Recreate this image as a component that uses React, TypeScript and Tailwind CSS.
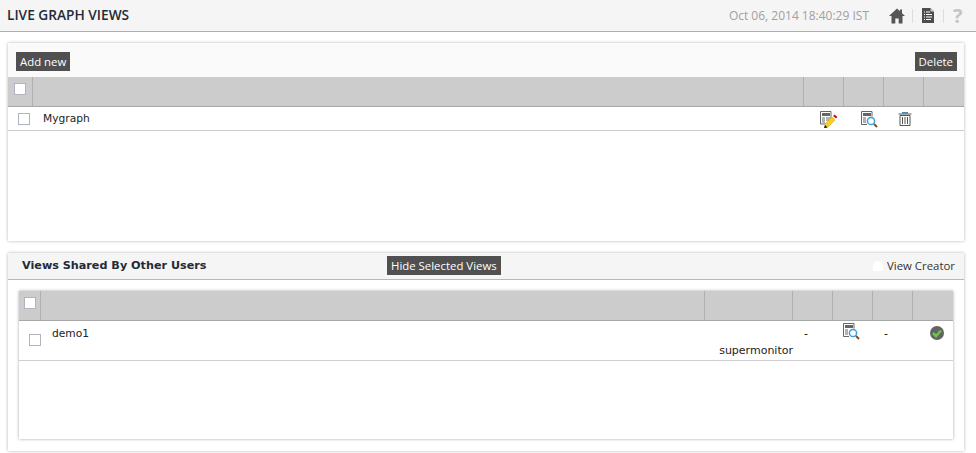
const sans = "font-['Open_Sans','Liberation_Sans',sans-serif]";
const deja = "font-['DejaVu_Sans','Liberation_Sans',sans-serif]";

function Check({ className = "" }: { className?: string }) {
  return <span className={`block w-[12px] h-[12px] bg-white border border-[#aeb4c0] ${className}`} />;
}

function EditIcon() {
  return (
    <svg width="18" height="17" viewBox="0 0 18 17">
      <path d="M.5.5h10.500v7l-4 5.500h-6.500z" fill="#fff" stroke="#666" />
      <rect x="2" y="2" width="8" height="3" fill="#666" />
      <path d="M2 7h3M2 9h3M2 11h3M6 7h4M6 9h3" stroke="#666" />
      <path d="M5 13l7-7 3 3-7 7-3 1z" fill="#f7cf1c" stroke="#caa012" strokeWidth=".5" />
      <path d="M13 5l1.500-1.500 3 2.500-1.500 1.500z" fill="#d8101c" />
      <path d="M5 14l2.500 2.500-3.500 .5z" fill="#111" />
    </svg>
  );
}

function ViewIcon() {
  return (
    <svg width="17" height="17" viewBox="0 0 17 17">
      <path d="M.5.500h10.500v5M6 13.500h-5.500v-13" fill="#fff" stroke="#666" />
      <rect x="2" y="2" width="8" height="3" fill="#666" />
      <path d="M2 7h3M2 9h3M2 11h3" stroke="#666" />
      <circle cx="10" cy="10" r="3.600" fill="#fff" stroke="#3b9fdc" strokeWidth="1.500" />
      <path d="M13 13l3 3" stroke="#8a4a2a" strokeWidth="2" />
    </svg>
  );
}

function TrashIcon() {
  return (
    <svg width="14" height="14" viewBox="0 0 14 14">
      <rect x="4" y="0" width="6" height="1.500" fill="#4a86b0" />
      <path d="M.5 2h13" stroke="#555" />
      <path d="M2 3.500h10v10h-10z" fill="#fff" stroke="#555" />
      <path d="M4.500 5v7M7 5v7M9.500 5v7" stroke="#555" />
    </svg>
  );
}

function HomeIcon() {
  return (
    <svg width="16" height="16" viewBox="0 0 16 16">
      <path d="M8 .5L0 8h2.500v7.500h3.800v-5h3.400v5h3.800V8H16l-3-2.800V1.500h-2v1.800z" fill="#555" />
    </svg>
  );
}

function DocIcon() {
  return (
    <svg width="12" height="15" viewBox="0 0 12 15">
      <path d="M0 0h8.500L12 3.500V15H0z" fill="#4d4d4d" />
      <path d="M8.500 0v3.500H12z" fill="#ccc" />
      <path d="M2 4h1M4 4h4M2 6.500h1M4 6.500h6M2 9h1M4 9h6M2 11.500h1M4 11.500h5" stroke="#fff" />
    </svg>
  );
}

function OkIcon() {
  return (
    <svg width="14" height="14" viewBox="0 0 14 14">
      <circle cx="7" cy="7" r="7" fill="#636363" />
      <path d="M3 7l3 3 5-5.500" fill="none" stroke="#6cc24c" strokeWidth="2.600" />
    </svg>
  );
}

function DarkButton({ label }: { label: string }) {
  return (
    <span className={`${sans} block bg-[#505050] text-white text-[11.400px] leading-[19px] h-[19px] px-[4px] whitespace-nowrap`}>
      {label}
    </span>
  );
}

export default function App() {
  return (
    <div className="w-[976px] h-[453px] bg-white overflow-hidden">
      {/* top bar */}
      <div className="h-[32px] bg-[#f5f5f5] border-b border-[#b0b0b0] flex items-center pl-[7px] pr-[11px]">
        <span className={`${sans} text-[13.700px] font-semibold text-[#222b36]`}>LIVE GRAPH VIEWS</span>
        <span className={`${sans} ml-auto text-[12px] text-[#a0a0a0]`}>Oct 06, 2014 18:40:29 IST</span>
        <div className="ml-[20px] flex items-center">
          <HomeIcon />
          <span className="ml-[7px] mr-[9px] w-px h-[14px] bg-[#ddd]" />
          <DocIcon />
          <span className="mx-[9px] w-px h-[14px] bg-[#ddd]" />
          <span className={`${sans} w-[12px] text-[20px] leading-none font-bold text-[#c4c4c4]`}>?</span>
        </div>
      </div>

      {/* my views */}
      <div className="mt-[11px] mx-[8px] h-[198px] w-[956px] bg-white shadow-[0_0_3px_rgba(0,0,0,0.3)]">
        <div className="h-[34px] bg-[#fafafa] flex items-end justify-between pl-[8px] pr-[7px] pb-[6px]">
          <DarkButton label="Add new" />
          <DarkButton label="Delete" />
        </div>
        <div className="h-[30px] bg-[#cccccc] border-b border-[#a8a8a8] flex">
          <div className="w-[25px] border-r border-[#b0b0b0] pl-[6px] pt-[6px]">
            <Check />
          </div>
          <div className="flex-1 border-r border-[#b0b0b0]" />
          <div className="w-[40px] border-r border-[#b0b0b0]" />
          <div className="w-[40px] border-r border-[#b0b0b0]" />
          <div className="w-[40px] border-r border-[#b0b0b0]" />
          <div className="w-[40px]" />
        </div>
        <div className="h-[24px] border-b border-[#cfcfcf] flex items-center">
          <div className="w-[35px] pl-[10px]">
            <Check />
          </div>
          <span className={`${deja} text-[10.700px] text-[#222] pt-[2px]`}>Mygraph</span>
          <div className="ml-auto flex items-center mr-[52px]">
            <div className="w-[40px] pl-[11px] pt-[2px]"><EditIcon /></div>
            <div className="w-[38px] pl-[12px] pt-[2px]"><ViewIcon /></div>
            <div className="w-[25px] pl-[11px] pt-[1px]"><TrashIcon /></div>
          </div>
        </div>
      </div>

      {/* shared views */}
      <div className="mt-[12px] mx-[8px] h-[198px] w-[956px] bg-white shadow-[0_0_3px_rgba(0,0,0,0.3)]">
        <div className="h-[27px] bg-[#f5f5f5] border-b border-[#b8b8b8] flex items-center pl-[14px] pr-[9px]">
          <span className={`${deja} text-[11.200px] font-bold text-[#222b36] w-[365px]`}>Views Shared By Other Users</span>
          <div className="-translate-y-px"><DarkButton label="Hide Selected Views" /></div>
          <div className="ml-auto flex items-center gap-[4px]">
            <span className="w-[10px] h-[10px] bg-white rounded-t-full" />
            <span className={`${sans} text-[11.400px] text-[#333]`}>View Creator</span>
          </div>
        </div>
        <div className="mt-[11px] mx-[11px] h-[148px] bg-white shadow-[0_0_3px_rgba(0,0,0,0.35)]">
          <div className="h-[30px] bg-[#cccccc] border-b border-[#a8a8a8] flex">
            <div className="w-[22px] border-r border-[#b0b0b0] pl-[5px] pt-[6px]">
              <Check />
            </div>
            <div className="flex-1 border-r border-[#b0b0b0]" />
            <div className="w-[88px] border-r border-[#b0b0b0]" />
            <div className="w-[40px] border-r border-[#b0b0b0]" />
            <div className="w-[40px] border-r border-[#b0b0b0]" />
            <div className="w-[40px] border-r border-[#b0b0b0]" />
            <div className="w-[40px]" />
          </div>
          <div className="h-[40px] border-b border-[#cfcfcf] flex">
            <div className="w-[33px] pl-[10px] pt-[13px]">
              <Check />
            </div>
            <span className={`${deja} text-[10.700px] text-[#222] pt-[5px]`}>demo1</span>
            <div className="ml-auto flex">
              <div className={`${deja} w-[88px] text-[11px] text-[#222] text-right pt-[22px]`}>supermonitor</div>
              <div className={`${deja} w-[40px] text-[11px] text-black pl-[11px] pt-[5px]`}>-</div>
              <div className="w-[40px] pl-[10px] pt-[2px]"><ViewIcon /></div>
              <div className={`${deja} w-[40px] text-[11px] text-black pl-[11px] pt-[5px]`}>-</div>
              <div className="w-[40px] pl-[17px] pt-[5px]"><OkIcon /></div>
            </div>
          </div>
        </div>
      </div>
    </div>
  );
}
